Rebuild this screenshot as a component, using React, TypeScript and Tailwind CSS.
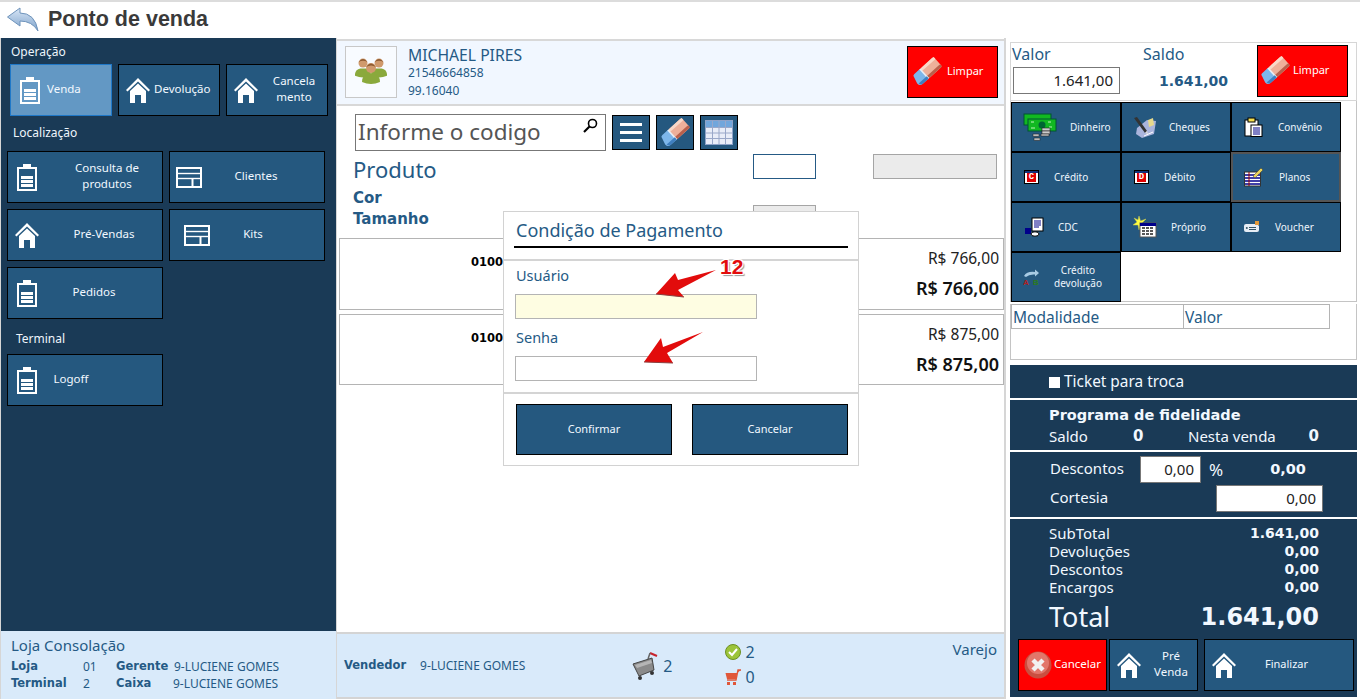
import React from "react";

const SANS = "font-['Noto_Sans','Open_Sans',sans-serif]";
const BOLD = "font-['DejaVu_Sans',sans-serif] font-bold";

function Battery() {
  return (
    <svg width="20" height="27" viewBox="0 0 20 27" className="shrink-0">
      <rect x="6" y="0" width="8" height="4" fill="#fff" />
      <rect x="1" y="4" width="18" height="22" fill="none" stroke="#fff" strokeWidth="2" />
      <rect x="4" y="12" width="12" height="3" fill="#fff" />
      <rect x="4" y="16" width="12" height="3" fill="#fff" />
      <rect x="4" y="20" width="12" height="3" fill="#fff" />
    </svg>
  );
}
function House() {
  return (
    <svg width="24" height="25" viewBox="0 0 24 25" className="shrink-0">
      <path d="M12 0 L24 12 L22.5 13.5 L12 3.5 L1.5 13.5 L0 12Z" fill="#fff" />
      <path d="M4 13 L12 5.5 L20 13 V25 H15 V17 H9 V25 H4Z" fill="#fff" />
    </svg>
  );
}
function LayoutIcon() {
  return (
    <svg width="26" height="21" viewBox="0 0 26 21" className="shrink-0">
      <rect x="1" y="1" width="24" height="19" fill="none" stroke="#fff" strokeWidth="2" />
      <path d="M1 6.5H25" stroke="#fff" strokeWidth="1.4" fill="none" />
      <path d="M1 11.5H25" stroke="#fff" strokeWidth="1.4" fill="none" />
      <path d="M16.5 11V20" stroke="#fff" strokeWidth="2" fill="none" />
    </svg>
  );
}
function Eraser() {
  return (
    <svg width="30" height="30" viewBox="0 0 30 30" className="shrink-0">
      <g transform="rotate(-42 15 15)">
        <rect x="12" y="8" width="18" height="13" rx="2" fill="#eeb09a" />
        <rect x="12" y="8" width="18" height="3" rx="1" fill="#f9d8c8" />
        <rect x="12" y="18" width="18" height="3" rx="1" fill="#b9604c" />
        <path d="M2 10 Q2 8 4 8 H12 V21 H4 Q0 21 0 17Z" fill="#7db6ea" />
        <rect x="11" y="8" width="1.6" height="13" fill="#e8eef5" />
        <path d="M1 18 H12 V21 H4 Q2 21 1 18Z" fill="#3f7fc0" />
      </g>
    </svg>
  );
}
function TableIcon() {
  return (
    <svg width="28" height="25" viewBox="0 0 28 25">
      <rect x="0.5" y="0.5" width="27" height="24" fill="#e9edf8" stroke="#8ea2c8" />
      <rect x="1" y="1" width="26" height="6" fill="#71a6dc" />
      <path d="M7.5 1V24M14 1V24M20.5 1V24M1 7.5H27M1 13H27M1 18.5H27" stroke="#9aa8c9" strokeWidth="1" fill="none" />
    </svg>
  );
}
function People() {
  const P = ({ x, y, s }: { x: number; y: number; s: number }) => (
    <g transform={`translate(${x} ${y}) scale(${s})`}>
      <path d="M-9 13 Q-9 6 -3 5 H3 Q9 6 9 13 Q0 17 -9 13Z" fill="#8aa93c" />
      <circle cx="0" cy="-1" r="5" fill="#d09a6c" />
      <path d="M-5 -2 Q0 -9 5 -2 Q0 -5 -5 -2Z" fill="#8c5a30" />
    </g>
  );
  return (
    <svg width="32" height="28" viewBox="0 0 32 28">
      <P x={8} y={6} s={0.9} />
      <P x={24} y={6} s={0.9} />
      <P x={16} y={11} s={1} />
    </svg>
  );
}
function Money() {
  return (
    <svg width="34" height="29" viewBox="0 0 34 29">
      <rect x="1" y="1" width="27" height="11" fill="#11b821" stroke="#053" />
      <rect x="5" y="6" width="28" height="12" fill="#11b821" stroke="#053" />
      <circle cx="19" cy="12" r="3.5" fill="#063" />
      <path d="M8 9h3M26 14h3M8 15h4M25 9h3" stroke="#bff5b8" />
      <rect x="19" y="15" width="8" height="3" fill="#ccc" stroke="#222" strokeWidth=".6" />
      <rect x="19" y="18" width="8" height="3" fill="#ccc" stroke="#222" strokeWidth=".6" />
      <rect x="18" y="21" width="8" height="2" fill="#ccc" stroke="#222" strokeWidth=".6" />
      <rect x="10" y="21" width="6" height="2.4" fill="#bbb" stroke="#222" strokeWidth=".5" />
      <rect x="11" y="25" width="6" height="2.4" fill="#bbb" stroke="#222" strokeWidth=".5" />
    </svg>
  );
}
function Cheque() {
  return (
    <svg width="23" height="23" viewBox="0 0 23 23">
      <path d="M4 12 L14 4 L23 5 L21 18 L9 22 L3 18Z" fill="#aab4dc" />
      <path d="M15 4 L20 2 L21 9 L16 11Z" fill="#e7d98c" />
      <path d="M1 2 L4 1 L14 15 L12 17Z" fill="#333" />
      <path d="M12 17 L14 15 L15 18Z" fill="#ddd" />
      <path d="M11 20 L20 16" stroke="#fff" fill="none" />
    </svg>
  );
}
function Clipboard() {
  return (
    <svg width="19" height="20" viewBox="0 0 19 20">
      <rect x="1" y="3" width="13" height="16" fill="#fff" stroke="#000" />
      <rect x="4" y="1" width="7" height="4" fill="#f5df50" stroke="#000" />
      <rect x="7" y="8" width="11" height="11.5" fill="#fff" stroke="#000" />
      <path d="M9 11h7M9 13h7M9 15h7M9 17h7" stroke="#00008b" fill="none" />
    </svg>
  );
}
function CardLetter({ l }: { l: string }) {
  return (
    <span className="relative flex h-[14px] w-[15px] items-end justify-center border border-black bg-white">
      <span className="absolute left-0 right-0 top-0 h-[2px] bg-[#12327a]" />
      <span className="mb-[1px] flex h-[9px] w-[9px] items-center justify-center bg-[#e00000] font-['Liberation_Mono',monospace] text-[9px] font-bold leading-none text-white">
        {l}
      </span>
    </span>
  );
}
function Planos() {
  return (
    <svg width="20" height="20" viewBox="0 0 20 20">
      <rect x="0.5" y="5" width="16" height="14" fill="#fff" stroke="#333" />
      <path d="M1 8h15M1 11h15M1 14h15M1 17h15" stroke="#00008b" strokeWidth="1.4" />
      <path d="M5 5v14" stroke="#900" />
      <path d="M9 9 L17 1 L19 3 L11 11Z" fill="#e9d45b" stroke="#333" strokeWidth=".5" />
    </svg>
  );
}
function Cdc() {
  return (
    <svg width="20" height="20" viewBox="0 0 20 20">
      <rect x="8" y="1" width="11" height="13" fill="#fff" stroke="#000" />
      <path d="M10 4h7M10 6h7M10 8h7M10 10h5" stroke="#00008b" />
      <rect x="1" y="11" width="6" height="6" fill="#00008b" />
      <ellipse cx="11" cy="17" rx="4" ry="2.2" fill="#fff" stroke="#000" />
    </svg>
  );
}
function Proprio() {
  return (
    <svg width="24" height="22" viewBox="0 0 24 22">
      <path d="M6 0 L7.5 5 L13 3 L9 7 L13 11 L8 10 L6 14 L5 9 L0 9 L4 6 L1 2 L5 4Z" fill="#ffff40" stroke="#c8c850" strokeWidth=".5" />
      <rect x="7" y="7" width="16" height="14" fill="#fff" stroke="#555" />
      <rect x="7" y="7" width="16" height="3" fill="#00008b" />
      <path d="M9 12h12M9 15h12M9 18h12" stroke="#222" strokeWidth="1.4" strokeDasharray="3 1" />
    </svg>
  );
}
function Voucher() {
  return (
    <svg width="16" height="12" viewBox="0 0 16 12">
      <path d="M2 3 H13 L15 5 V9 Q15 11 13 11 H2 Q0 11 0 9 V5 Q0 3 2 3Z" fill="#e6edf5" />
      <path d="M5 6.5h7M5 8.5h7" stroke="#356" />
      <circle cx="2.8" cy="7" r="1" fill="#356" />
      <rect x="11" y="0" width="4" height="4" fill="#e29a3b" />
    </svg>
  );
}
function CreditoDev() {
  return (
    <svg width="17" height="17" viewBox="0 0 17 17">
      <path d="M1 7 Q4 2 12 3 L12 0.5 L16 4 L12 7.5 L12 5.5 Q6 5 3 8Z" fill="#a8cbe4" />
      <text x="0" y="16" fontSize="8" fontWeight="700" fill="#b02020" fontFamily="Liberation Sans">A</text>
      <text x="10" y="16" fontSize="8" fontWeight="700" fill="#2c7a20" fontFamily="Liberation Sans">B</text>
    </svg>
  );
}
function BackArrow() {
  return (
    <svg width="33" height="25" viewBox="0 0 33 25">
      <defs>
        <linearGradient id="ba" x1="0" y1="0" x2="0" y2="1">
          <stop offset="0" stopColor="#d8e6f6" />
          <stop offset="1" stopColor="#7fa3cb" />
        </linearGradient>
      </defs>
      <path d="M0.5 10 L13 1 V6 Q28 6 31 24 Q25 14 13 14 V19Z" fill="url(#ba)" stroke="#6e93bb" strokeWidth="1" />
    </svg>
  );
}

function Btn({ className, children }: { className: string; children: React.ReactNode }) {
  return (
    <div className={`flex h-[52px] items-center border border-black bg-[#25587f] text-[11.5px] leading-[16px] text-[#f2f8ff] [&>span:last-child]:-translate-y-px ${className}`}>
      {children}
    </div>
  );
}
function NavBtn({ icon, label, labelClass }: { icon: React.ReactNode; label: React.ReactNode; labelClass: string }) {
  return (
    <Btn className="w-[156px]">
      <span className="ml-[5px] flex w-[28px] justify-center">{icon}</span>
      <span className={`text-center ${labelClass}`}>{label}</span>
    </Btn>
  );
}
function PayBtn({ icon, iconClass, label, labelClass, className }: { icon: React.ReactNode; iconClass: string; label: React.ReactNode; labelClass: string; className?: string }) {
  return (
    <div className={`flex h-[50px] w-[110px] items-center bg-[#25587f] text-[10px] leading-[13px] text-[#eef5fc] ${className ?? "border border-black"}`}>
      <span className={`flex shrink-0 justify-center ${iconClass}`}>{icon}</span>
      <span className={`text-center ${labelClass}`}>{label}</span>
    </div>
  );
}
function Row({ price, className }: { price: string; className: string }) {
  return (
    <div className={`relative border border-[#b4b4b4] bg-white ${className}`}>
      <span className={`${BOLD} absolute left-[131px] top-[15px] text-[11.5px] leading-[16px] text-black`}>0100</span>
      <span className="absolute right-[4px] top-[9px] text-[15.5px] leading-[20px] text-[#222]">R$ {price}</span>
      <span className="absolute right-[4px] top-[37px] text-[18px] font-semibold leading-[24px] text-[#111]">R$ {price}</span>
    </div>
  );
}

export default function App() {
  return (
    <div className={`${SANS} relative flex h-[699px] w-[1360px] flex-col overflow-hidden bg-white`}>
      {/* Title */}
      <div className="flex h-[38px] shrink-0 items-center border-t-2 border-[#dcdcdc] pb-[2px] pl-[7px]">
        <BackArrow />
        <span className="ml-[8px] font-['Liberation_Sans',sans-serif] text-[21.5px] font-bold text-[#3a3a3a]">Ponto de venda</span>
      </div>

      <div className="flex min-h-0 flex-1">
        {/* Left */}
        <div className="flex w-[337px] shrink-0 flex-col border-l border-r border-[#d6d6d6]">
          <div className="flex flex-1 flex-col bg-[#1a3a56] text-[12px] text-[#eef5fc]">
            <div className="mt-[5px] h-[17px] pl-[10px] leading-[17px]">Operação</div>
            <div className="mt-[4px] flex gap-[6px] pl-[9px]">
              <Btn className="w-[102px] !border-[#1f78c8] !bg-[#6398c4]">
                <span className="ml-[9px]"><Battery /></span>
                <span className="ml-[7px]">Venda</span>
              </Btn>
              <Btn className="w-[102px]">
                <span className="ml-[7px]"><House /></span>
                <span className="ml-[4px]">Devolução</span>
              </Btn>
              <Btn className="w-[102px]">
                <span className="ml-[7px]"><House /></span>
                <span className="ml-[3px] flex-1 text-center">Cancela<br />mento</span>
              </Btn>
            </div>
            <div className="mt-[8px] h-[17px] pl-[12px] leading-[17px]">Localização</div>
            <div className="mt-[10px] grid w-[318px] grid-cols-[156px_156px] gap-x-[6px] gap-y-[6px] pl-[6px]">
              <NavBtn icon={<Battery />} label={<>Consulta de<br />produtos</>} labelClass="ml-[29px] w-[74px]" />
              <NavBtn icon={<LayoutIcon />} label="Clientes" labelClass="ml-[18px] w-[70px]" />
              <NavBtn icon={<House />} label="Pré-Vendas" labelClass="ml-[28px] w-[70px]" />
              <NavBtn icon={<span className="ml-[16px]"><LayoutIcon /></span>} label="Kits" labelClass="ml-[25px] w-[50px]" />
              <NavBtn icon={<Battery />} label="Pedidos" labelClass="ml-[23px] w-[60px]" />
            </div>
            <div className="mt-[11px] h-[17px] pl-[15px] leading-[17px]">Terminal</div>
            <div className="mt-[7px] pl-[6px]">
              <NavBtn icon={<Battery />} label="Logoff" labelClass="ml-[5px] w-[50px]" />
            </div>
          </div>
          <div className="h-[68px] shrink-0 bg-[#d9eafa] pl-[10px] pt-[4px] text-[#255a85]">
            <div className="text-[15px] leading-[20px]">Loja Consolação</div>
            <div className="mt-[3px] grid grid-cols-[72px_33px_59px_auto] text-[12px] leading-[17px]">
              <span className={`${BOLD} text-[11.5px]`}>Loja</span>
              <span>01</span>
              <span className={`${BOLD} text-[11.5px]`}>Gerente</span>
              <span className="-ml-[1px]">9-LUCIENE GOMES</span>
              <span className={`${BOLD} text-[11.5px]`}>Terminal</span>
              <span>2</span>
              <span className={`${BOLD} text-[11.5px]`}>Caixa</span>
              <span className="-ml-[2px]">9-LUCIENE GOMES</span>
            </div>
          </div>
        </div>

        {/* Center */}
        <div className="flex w-[669px] shrink-0 flex-col border-r-2 border-[#d6d6d6]">
          <div className="mt-[1px] flex h-[67px] shrink-0 items-start border-y-2 border-[#d8d8d8] bg-[#f1f7ff] pl-[8px] pr-[6px] pt-[5px]">
            <div className="flex h-[52px] w-[52px] items-center justify-center border border-[#c8c8c8] bg-[#f8fbff]">
              <People />
            </div>
            <div className="ml-[11px] text-[#255a85]">
              <div className="text-[15.7px] leading-[18px]">MICHAEL PIRES</div>
              <div className="text-[12px] leading-[18px]">21546664858</div>
              <div className="text-[12px] leading-[18px]">99.16040</div>
            </div>
            <div className="ml-auto flex h-[52px] w-[91px] items-center border border-black bg-[#ff0000] pl-[4px] text-[11px] text-white">
              <Eraser />
              <span className="ml-[5px] -translate-y-px">Limpar</span>
            </div>
          </div>

          <div className="relative h-[132px] shrink-0 pl-[16px]">
            <div className="ml-[2px] mt-[8px] flex items-start gap-[6px]">
              <div className="flex h-[37px] w-[251px] items-center justify-between border border-[#777] pb-[2px] pl-[2px] pr-[7px] text-[22.5px] text-[#555]">
                <span className="leading-[30px]">Informe o codigo</span>
                <svg width="15" height="15" viewBox="0 0 15 15" className="-mt-[12px]">
                  <circle cx="9.5" cy="5.5" r="4" fill="none" stroke="#000" strokeWidth="1.6" />
                  <path d="M6.5 8.5 L1 14" stroke="#000" strokeWidth="2.2" />
                </svg>
              </div>
              <div className="mt-px flex h-[35px] w-[38px] flex-col items-center justify-center gap-[5px] border border-black bg-[#25587f]">
                <span className="h-[3px] w-[22px] bg-white" />
                <span className="h-[3px] w-[22px] bg-white" />
                <span className="h-[3px] w-[22px] bg-white" />
              </div>
              <div className="mt-px flex h-[35px] w-[38px] items-center justify-center border border-black bg-[#25587f]">
                <Eraser />
              </div>
              <div className="mt-px flex h-[35px] w-[38px] items-center justify-center border border-black bg-[#25587f]">
                <TableIcon />
              </div>
            </div>
            <div className="mt-[1px] text-[22px] leading-[34px] text-[#255a85]">Produto</div>
            <div className={`${BOLD} mt-[2px] text-[15px] leading-[21px] text-[#255a85]`}>Cor</div>
            <div className={`${BOLD} text-[15px] leading-[21px] text-[#255a85]`}>Tamanho</div>
            <div className="absolute left-[416px] top-[48px] h-[25px] w-[63px] border border-[#255a85] bg-white" />
            <div className="absolute left-[536px] top-[48px] h-[25px] w-[124px] border border-[#a5a5a5] bg-[#ebebeb]" />
            <div className="absolute left-[416px] top-[99px] h-[25px] w-[63px] border border-[#a5a5a5] bg-[#ebebeb]" />
          </div>

          <div className="flex flex-1 flex-col gap-[4px] pl-[2px]">
            <Row price="766,00" className="h-[72px]" />
            <Row price="875,00" className="h-[71px]" />
          </div>

          <div className="relative flex h-[67px] shrink-0 items-center border-y-2 border-[#d4d4d4] bg-[#d9eafa] pl-[7px] text-[#255a85]">
            <span className={`${BOLD} text-[11.5px]`}>Vendedor</span>
            <span className="ml-[14px] text-[12px]">9-LUCIENE GOMES</span>
            <svg width="26" height="30" viewBox="0 0 26 30" className="ml-[107px]">
              <path d="M18 2 L25 5" stroke="#c8242c" strokeWidth="2" />
              <path d="M18 2 L16 8" stroke="#666" strokeWidth="1.5" />
              <path d="M1 13 L20 7 L22 19 L7 25Z" fill="#8a8a8a" stroke="#444" />
              <path d="M3 14 L19 9 L20 12 L5 17Z" fill="#b5b5b5" />
              <circle cx="8" cy="27" r="2" fill="#333" />
              <circle cx="20" cy="22" r="2" fill="#333" />
            </svg>
            <span className="ml-[5px] text-[16px]">2</span>
            <div className="ml-[53px] -mt-[2px] flex flex-col gap-[5px] text-[16px] leading-[20px]">
              <div className="flex items-center gap-[4px]">
                <svg width="16" height="16" viewBox="0 0 16 16">
                  <circle cx="8" cy="8" r="7.5" fill="#9cc43a" stroke="#6d9022" />
                  <path d="M4 8 L7 11 L12 5" fill="none" stroke="#fff" strokeWidth="2" />
                </svg>
                <span>2</span>
              </div>
              <div className="flex items-center gap-[4px]">
                <svg width="16" height="16" viewBox="0 0 16 16">
                  <path d="M16 1 H13 L11 10 H2 L0.5 4 H12" fill="#e0573a" />
                  <path d="M16 1 H13 L11 11 H2" stroke="#e0573a" strokeWidth="1.4" fill="none" />
                  <rect x="2" y="13" width="3" height="3" fill="#e0573a" />
                  <rect x="8" y="13" width="3" height="3" fill="#e0573a" />
                </svg>
                <span>0</span>
              </div>
            </div>
            <span className="absolute right-[7px] top-[5px] text-[15px] leading-[20px]">Varejo</span>
          </div>
        </div>

        {/* Right */}
        <div className="flex min-w-0 flex-1 flex-col pl-[4px] pr-[3px]">
          <div className="mt-[4px] h-[59px] shrink-0 border border-[#d6d6d6] pl-[1px]">
            <div className="relative h-full text-[#255a85]">
              <span className="absolute left-0 top-[1px] text-[16px] leading-[20px]">Valor</span>
              <span className="absolute left-[131px] top-[1px] text-[16px] leading-[20px]">Saldo</span>
              <div className="absolute left-[1px] top-[24px] flex h-[27px] w-[107px] items-center justify-end border border-[#777] pr-[6px] text-[15px] text-[#222]">1.641,00</div>
              <span className={`${BOLD} absolute left-[147px] top-[28px] text-[14px] leading-[20px]`}>1.641,00</span>
              <div className="absolute left-[245px] top-[2px] flex h-[52px] w-[91px] items-center border border-black bg-[#ff0000] pl-[2px] text-[11px] text-white">
                <Eraser />
                <span className="ml-[3px] -translate-y-px">Limpar</span>
              </div>
            </div>
          </div>
          <div className="h-[201px] shrink-0 border-x border-b border-[#c4c4c4]">
            <div className="mt-[1px] grid w-[330px] grid-cols-[110px_110px_110px]">
              <PayBtn icon={<Money />} iconClass="ml-[11px]" label="Dinheiro" labelClass="ml-[13px]" />
              <PayBtn icon={<Cheque />} iconClass="ml-[11px]" label="Cheques" labelClass="ml-[13px]" />
              <PayBtn icon={<Clipboard />} iconClass="ml-[12px]" label="Convênio" labelClass="ml-[15px]" />
              <PayBtn icon={<CardLetter l="C" />} iconClass="ml-[12px]" label="Crédito" labelClass="ml-[15px]" />
              <PayBtn icon={<CardLetter l="D" />} iconClass="ml-[12px]" label="Débito" labelClass="ml-[15px]" />
              <PayBtn icon={<Planos />} iconClass="ml-[11px]" label="Planos" labelClass="ml-[15px]" className="border-2 border-[#555]" />
              <PayBtn icon={<Cdc />} iconClass="ml-[12px]" label="CDC" labelClass="ml-[14px]" />
              <PayBtn icon={<Proprio />} iconClass="ml-[11px]" label="Próprio" labelClass="ml-[14px]" />
              <PayBtn icon={<Voucher />} iconClass="ml-[12px]" label="Voucher" labelClass="ml-[15px]" />
              <PayBtn icon={<CreditoDev />} iconClass="ml-[11px]" label={<>Crédito<br />devolução</>} labelClass="ml-[14px]" />
            </div>
          </div>
          <div className="mt-[2px] h-[56px] shrink-0 border-x border-b border-[#c4c4c4]">
            <div className="flex h-[25px] w-[319px] border border-[#b4b4b4] text-[15.5px] leading-[24px] text-[#255a85]">
              <span className="w-[172px] border-r border-[#b4b4b4] pl-[1px]">Modalidade</span>
              <span className="pl-[1px]">Valor</span>
            </div>
          </div>

          <div className="mt-[5px] flex h-[33px] shrink-0 items-center bg-[#1a3a56] pl-[39px] pt-[1px] text-[15.4px] text-[#f2f8ff]">
            <span className="h-[11px] w-[11px] bg-white" />
            <span className="ml-[4px]">Ticket para troca</span>
          </div>
          <div className="mt-[2px] h-[50px] shrink-0 bg-[#1a3a56] pl-[39px] pr-[38px] pt-[5px] text-[#f2f8ff]">
            <div className={`${BOLD} text-[14.5px] leading-[20px]`}>Programa de fidelidade</div>
            <div className="mt-[1px] flex items-center text-[15px] leading-[20px]">
              <span className="w-[84px]">Saldo</span>
              <span className={`${BOLD} w-[55px] text-[15px]`}>0</span>
              <span>Nesta venda</span>
              <span className={`${BOLD} ml-auto text-[15px]`}>0</span>
            </div>
          </div>
          <div className="mt-[2px] h-[65px] shrink-0 bg-[#1a3a56] pl-[40px] pr-[34px] pt-[4px] text-[15px] text-[#f2f8ff]">
            <div className="flex h-[27px] items-center">
              <span className="w-[90px] -translate-y-px">Descontos</span>
              <span className="flex h-[27px] w-[61px] items-center justify-end border border-[#777] bg-white pr-[6px] text-[#222]">0,00</span>
              <span className="ml-[8px] text-[17px]">%</span>
              <span className={`${BOLD} ml-[47px] text-[14.5px]`}>0,00</span>
            </div>
            <div className="mt-[2px] flex h-[27px] items-center justify-between">
              <span className="-translate-y-px">Cortesia</span>
              <span className="flex h-[27px] w-[107px] items-center justify-end border border-[#777] bg-white pr-[6px] text-[#222]">0,00</span>
            </div>
          </div>
          <div className="mt-[2px] h-[178px] shrink-0 bg-[#1a3a56] text-[#f2f8ff]">
            <div className="pl-[39px] pr-[38px] pt-[5px] text-[15px] leading-[18px]">
              {[
                ["SubTotal", "1.641,00"],
                ["Devoluções", "0,00"],
                ["Descontos", "0,00"],
                ["Encargos", "0,00"],
              ].map(([a, b]) => (
                <div key={a} className="flex justify-between">
                  <span>{a}</span>
                  <span className={`${BOLD} text-[14px]`}>{b}</span>
                </div>
              ))}
              <div className="mt-[3px] flex items-center justify-between">
                <span className="text-[27px] leading-[36px]">Total</span>
                <span className={`${BOLD} text-[24px] leading-[36px]`}>1.641,00</span>
              </div>
            </div>
            <div className="mt-[4px] flex pl-[8px]">
              <Btn className="w-[89px] !bg-[#ff0000] text-white">
                <svg width="28" height="28" viewBox="0 0 28 28" className="ml-[5px] shrink-0">
                  <circle cx="14" cy="14" r="13.5" fill="#c94f40" />
                  <circle cx="14" cy="12" r="11" fill="#e2766a" />
                  <path d="M9 9 L19 19 M19 9 L9 19" stroke="#f2f2f2" strokeWidth="4.5" />
                </svg>
                <span className="ml-[2px]">Cancelar</span>
              </Btn>
              <Btn className="ml-[2px] w-[89px]">
                <span className="ml-[7px]"><House /></span>
                <span className="ml-[4px] flex-1 text-center">Pré<br />Venda</span>
              </Btn>
              <Btn className="ml-[6px] w-[150px]">
                <span className="ml-[7px]"><House /></span>
                <span className="ml-[29px] text-[11px]">Finalizar</span>
              </Btn>
            </div>
          </div>
        </div>
      </div>

      {/* Modal */}
      <div className="absolute left-[503px] top-[211px] h-[255px] w-[356px] border border-[#d2d2d2] bg-white text-[#255a85]">
        <div className="ml-[10px] mr-[10px] h-[36px] border-b-2 border-black pl-[2px] pt-[6px] text-[18px] leading-[24px]">Condição de Pagamento</div>
        <div className="mt-[11px] h-[135px] border-y-2 border-[#d4d4d4] pl-[11px]">
          <div className="mt-[3px] pl-[1px] text-[14.5px] leading-[22px]">Usuário</div>
          <div className="mt-[8px] h-[25px] w-[242px] border border-[#b4b4b4] bg-[#fefde2]" />
          <div className="mt-[7px] pl-[1px] text-[14.5px] leading-[22px]">Senha</div>
          <div className="mt-[8px] h-[25px] w-[242px] border border-[#b4b4b4] bg-white" />
        </div>
        <div className="mt-[10px] flex gap-[20px] pl-[12px] text-[11px] text-[#f2f8ff]">
          <div className="flex h-[51px] w-[156px] items-center justify-center border border-black bg-[#25587f]">Confirmar</div>
          <div className="flex h-[51px] w-[156px] items-center justify-center border border-black bg-[#25587f]">Cancelar</div>
        </div>
        <svg width="65" height="30" viewBox="0 0 65 30" className="absolute left-[150px] top-[58px]">
          <path d="M62 0 L24 10 L21 3 L2 24 L30 27 L24 20 Z" fill="#e20c0c" />
          <path d="M2 24 L30 27" stroke="#8a4040" strokeWidth="1" />
        </svg>
        <svg width="65" height="36" viewBox="0 0 65 36" className="absolute left-[138px] top-[118px]">
          <path d="M61 2 L21 17 L19 8 L2 32 L31 33 L25 23 Z" fill="#e20c0c" />
          <path d="M2 32 L31 33" stroke="#8a4040" strokeWidth="1" />
        </svg>
        <span className={`absolute left-[216px] top-[43px] font-['Liberation_Sans',sans-serif] text-[21px] font-bold leading-[24px] text-[#e20c0c] [text-shadow:1px_1px_0_#fff,-1px_-1px_0_#fff,1px_-1px_0_#fff,-1px_1px_0_#fff,2px_2px_1px_#999]`}>12</span>
      </div>
    </div>
  );
}
